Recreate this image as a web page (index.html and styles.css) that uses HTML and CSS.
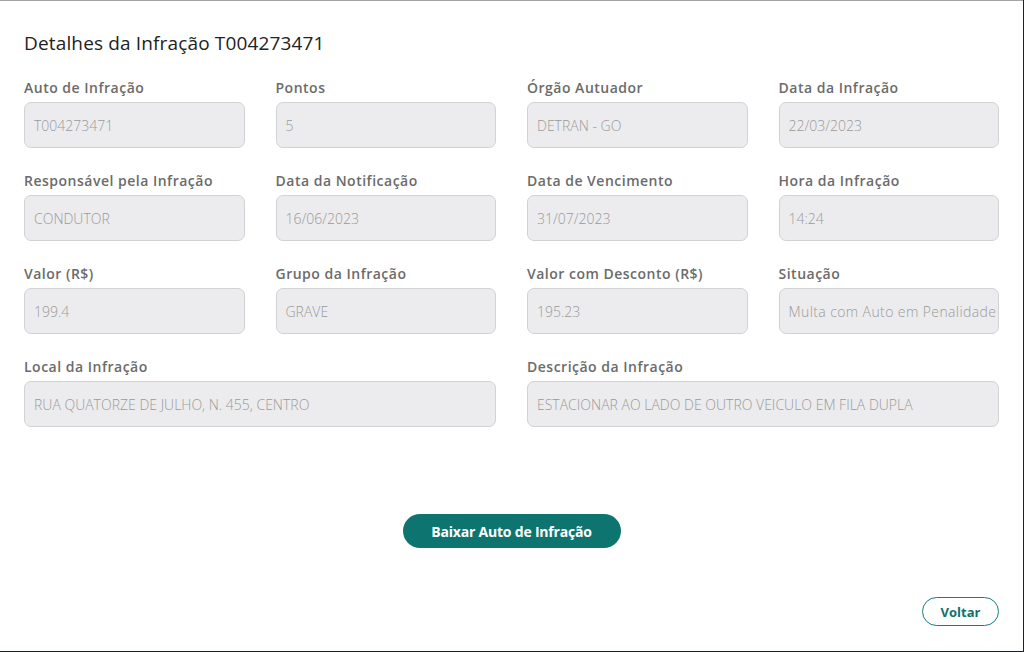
FILE: index.html
```html
<!DOCTYPE html>
<html lang="pt-BR">
<head>
<meta charset="utf-8">
<title>Detalhes da Infração</title>
<link rel="stylesheet" href="styles.css">
</head>
<body>
<div class="modal">
  <h1 class="title">Detalhes da Infração T004273471</h1>
  <div class="grid">
    <div class="field"><label>Auto de Infração</label><div class="input">T004273471</div></div>
    <div class="field"><label>Pontos</label><div class="input">5</div></div>
    <div class="field"><label>Órgão Autuador</label><div class="input">DETRAN - GO</div></div>
    <div class="field"><label>Data da Infração</label><div class="input">22/03/2023</div></div>

    <div class="field"><label>Responsável pela Infração</label><div class="input">CONDUTOR</div></div>
    <div class="field"><label>Data da Notificação</label><div class="input">16/06/2023</div></div>
    <div class="field"><label>Data de Vencimento</label><div class="input">31/07/2023</div></div>
    <div class="field"><label>Hora da Infração</label><div class="input">14:24</div></div>

    <div class="field"><label>Valor (R$)</label><div class="input">199.4</div></div>
    <div class="field"><label>Grupo da Infração</label><div class="input">GRAVE</div></div>
    <div class="field"><label>Valor com Desconto (R$)</label><div class="input">195.23</div></div>
    <div class="field"><label>Situação</label><div class="input wide">Multa com Auto em Penalidade</div></div>

    <div class="field span2"><label>Local da Infração</label><div class="input">RUA QUATORZE DE JULHO, N. 455, CENTRO</div></div>
    <div class="field span2"><label>Descrição da Infração</label><div class="input">ESTACIONAR AO LADO DE OUTRO VEICULO EM FILA DUPLA</div></div>
  </div>
  <div class="actions">
    <button class="btn-primary">Baixar Auto de Infração</button>
  </div>
  <div class="footer">
    <button class="btn-outline">Voltar</button>
  </div>
</div>
</body>
</html>
```

FILE: styles.css
```css
* { box-sizing: border-box; }
html, body { margin: 0; padding: 0; }
body {
  background: #1e2226;
  width: 1024px;
  height: 652px;
  overflow: hidden;
  font-family: "Open Sans", "Noto Sans", sans-serif;
}
.modal {
  width: 1023px;
  height: 651px;
  background: #fff;
  border-top: 1px solid #a3a3a3;
  padding: 0 24px;
  display: flex;
  flex-direction: column;
}
.title {
  margin: 29px 0 0;
  font-size: 19px;
  line-height: 26px;
  font-weight: 500;
  color: #222;
  letter-spacing: 0.15px;
}
.grid {
  margin-top: 22px;
  display: grid;
  grid-template-columns: repeat(4, 1fr);
  column-gap: 31px;
  row-gap: 23px;
}
.span2 { grid-column: span 2; }
.field { display: flex; flex-direction: column; min-width: 0; }
.field label {
  font-size: 14px;
  line-height: 20px;
  font-weight: 600;
  color: #6b6b6b;
  margin-bottom: 4px;
  white-space: nowrap;
  letter-spacing: 0.5px;
}
.input {
  height: 46px;
  background: #ececee;
  border: 1px solid #d2d2d4;
  border-radius: 7px;
  padding: 0 9px;
  display: flex;
  align-items: center;
  font-size: 14px;
  font-weight: 300;
  color: #9a9a9a;
  white-space: nowrap;
  overflow: hidden;
}
.input.wide { letter-spacing: 0.4px; }
.actions {
  display: flex;
  justify-content: center;
  margin-top: 87px;
}
.btn-primary {
  width: 218px;
  height: 34px;
  border: none;
  border-radius: 17px;
  background: #0e7470;
  color: #fff;
  font-family: "Open Sans", "Noto Sans", sans-serif;
  font-size: 14px;
  font-weight: 700;
  letter-spacing: -0.2px;
}
.footer {
  display: flex;
  justify-content: flex-end;
  margin-top: 49px;
}
.btn-outline {
  width: 77px;
  height: 29px;
  border: 1px solid #1a7b77;
  border-radius: 15px;
  background: #fff;
  color: #13706c;
  font-family: "Open Sans", "Noto Sans", sans-serif;
  font-size: 13px;
  font-weight: 700;
}
```
